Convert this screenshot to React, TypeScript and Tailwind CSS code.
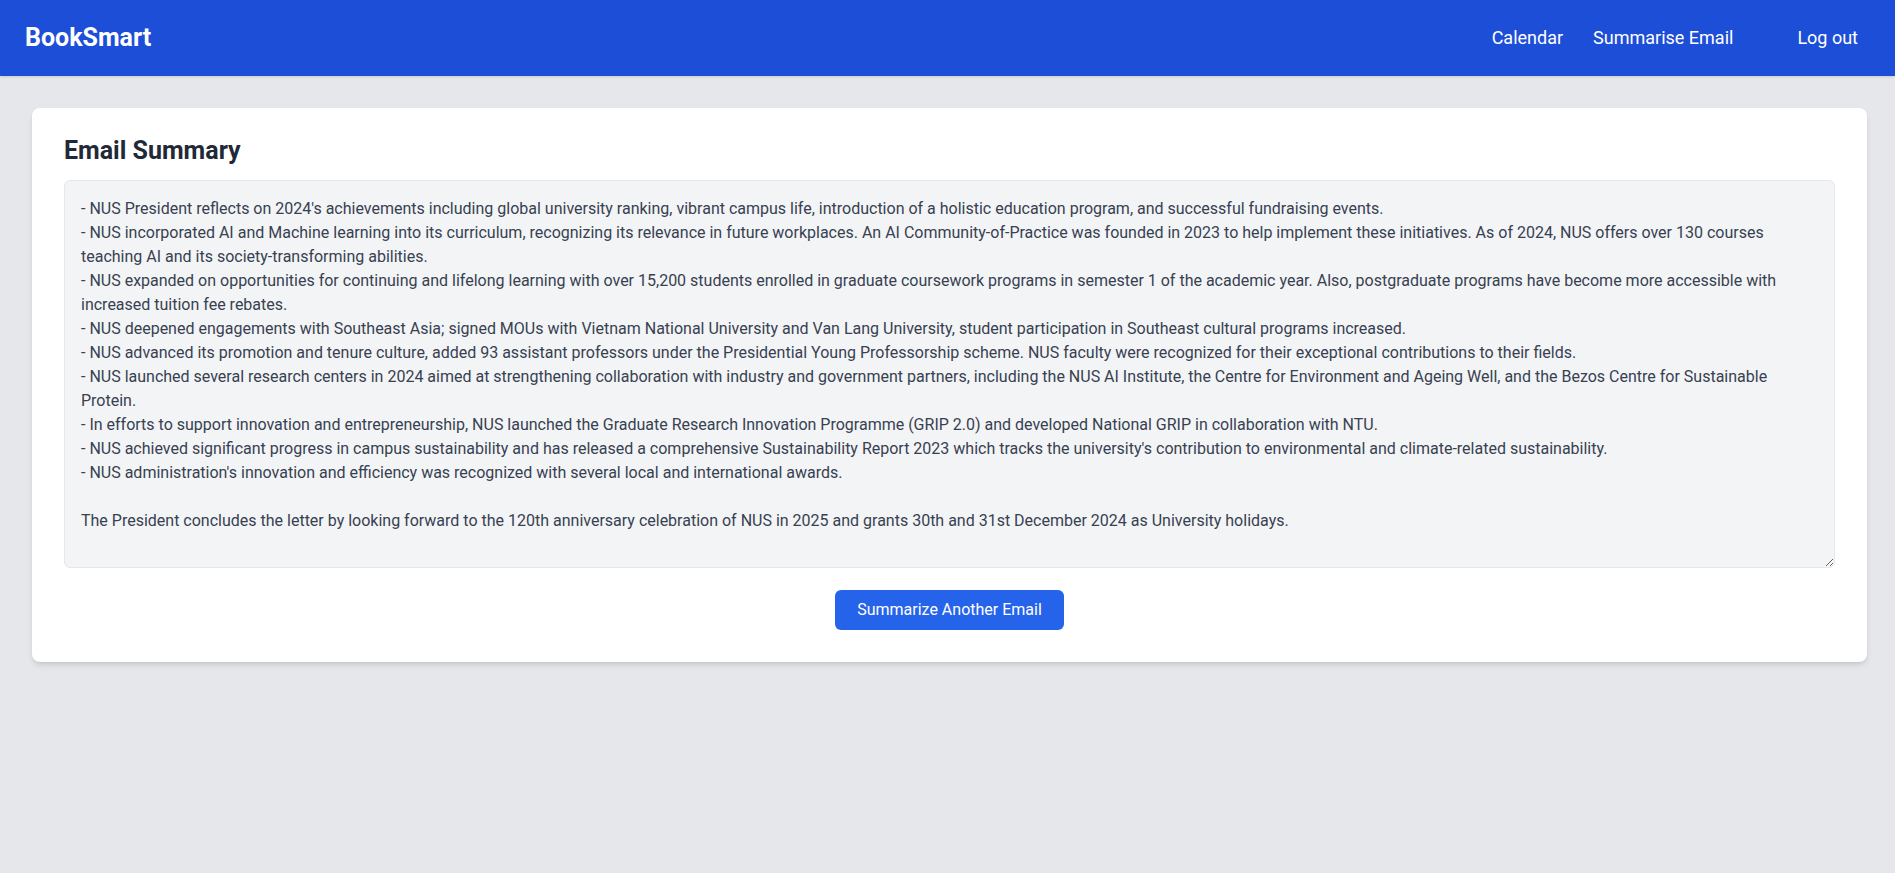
import React from "react";

const lines = [
  "- NUS President reflects on 2024's achievements including global university ranking, vibrant campus life, introduction of a holistic education program, and successful fundraising events.",
  "- NUS incorporated AI and Machine learning into its curriculum, recognizing its relevance in future workplaces. An AI Community-of-Practice was founded in 2023 to help implement these initiatives. As of 2024, NUS offers over 130 courses",
  "teaching AI and its society-transforming abilities.",
  "- NUS expanded on opportunities for continuing and lifelong learning with over 15,200 students enrolled in graduate coursework programs in semester 1 of the academic year. Also, postgraduate programs have become more accessible with",
  "increased tuition fee rebates.",
  "- NUS deepened engagements with Southeast Asia; signed MOUs with Vietnam National University and Van Lang University, student participation in Southeast cultural programs increased.",
  "- NUS advanced its promotion and tenure culture, added 93 assistant professors under the Presidential Young Professorship scheme. NUS faculty were recognized for their exceptional contributions to their fields.",
  "- NUS launched several research centers in 2024 aimed at strengthening collaboration with industry and government partners, including the NUS AI Institute, the Centre for Environment and Ageing Well, and the Bezos Centre for Sustainable",
  "Protein.",
  "- In efforts to support innovation and entrepreneurship, NUS launched the Graduate Research Innovation Programme (GRIP 2.0) and developed National GRIP in collaboration with NTU.",
  "- NUS achieved significant progress in campus sustainability and has released a comprehensive Sustainability Report 2023 which tracks the university's contribution to environmental and climate-related sustainability.",
  "- NUS administration's innovation and efficiency was recognized with several local and international awards.",
  "",
  "The President concludes the letter by looking forward to the 120th anniversary celebration of NUS in 2025 and grants 30th and 31st December 2024 as University holidays.",
];

export default function App() {
  return (
    <div className="min-h-screen bg-[#e5e7eb] font-['Roboto',sans-serif]">
      <nav className="h-[76px] bg-[#1d4ed8] flex items-center justify-between pl-[25px] pr-[21px] shadow-sm">
        <div className="text-[25px] leading-8 font-bold text-white">BookSmart</div>
        <div className="flex items-center text-lg text-white">
          <a className="px-4">Calendar</a>
          <a className="pl-[14px] pr-4">Summarise Email</a>
          <button className="ml-8 px-4">Log out</button>
        </div>
      </nav>
      <main className="pt-8 pl-8 pr-[28px]">
        <div className="bg-white rounded-lg shadow-md pt-[27px] px-8 pb-8">
          <h2 className="text-[25px] leading-8 font-bold text-[#1f2937] mb-[13px]">Email Summary</h2>
          <textarea
            readOnly
            wrap="off"
            value={lines.join("\n")}
            className="block w-full h-[388px] p-4 bg-[#f3f4f6] border border-[#e5e7eb] rounded-md text-[#374151] text-base leading-6 overflow-hidden resize-y outline-none"
          />
          <div className="flex justify-center mt-[22px]">
            <button className="bg-[#2563eb] text-white text-base leading-6 px-[22px] py-2 rounded-md">
              Summarize Another Email
            </button>
          </div>
        </div>
      </main>
    </div>
  );
}
